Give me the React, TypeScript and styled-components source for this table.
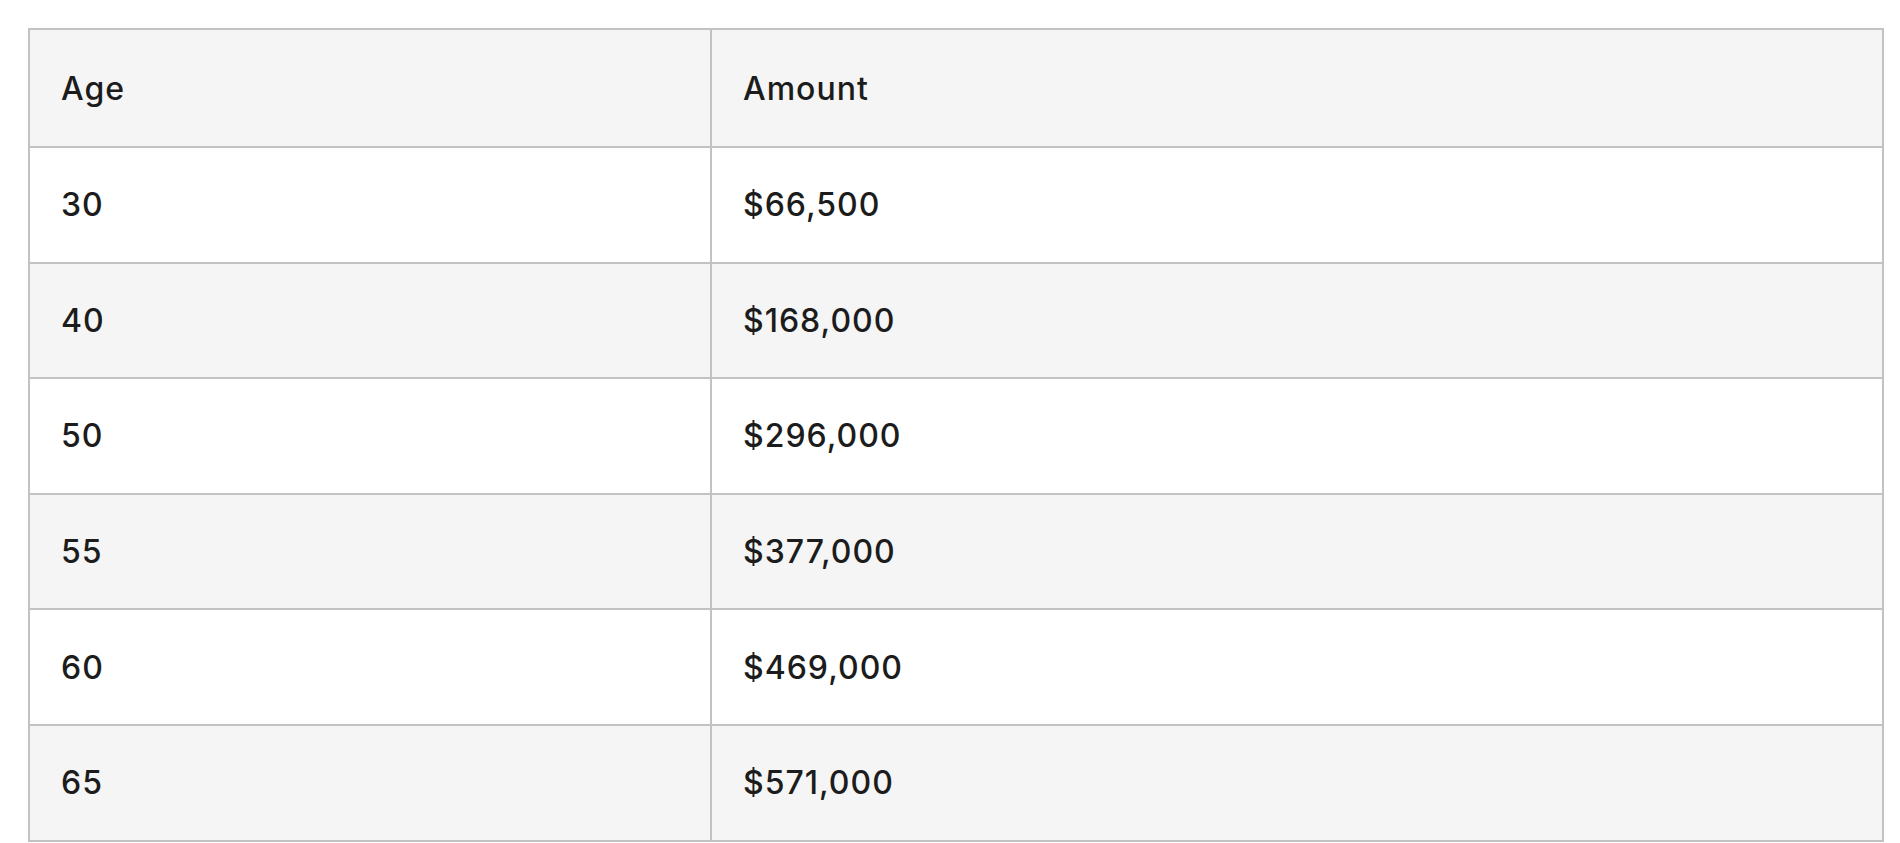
import React from "react";
import styled, { createGlobalStyle } from "styled-components";

const GlobalStyle = createGlobalStyle`
  html, body {
    margin: 0;
    padding: 0;
    background: #ffffff;
  }
  body {
    font-family: Inter, "Liberation Sans", sans-serif;
    color: #1c1c1c;
  }
`;

const Page = styled.div`
  padding: 28px 16px 0 28px;
`;

const Table = styled.table`
  width: 100%;
  border-collapse: collapse;
  table-layout: fixed;
  border: 2px solid #c2c2c2;
`;

const HeadCell = styled.th`
  height: 116px;
  padding: 0 31px;
  text-align: left;
  font-weight: 500;
  font-size: 32px;
  letter-spacing: 1px;
  background: #f5f5f5;
  border: 2px solid #c2c2c2;
`;

const Row = styled.tr<{ $striped: boolean }>`
  background: ${(p) => (p.$striped ? "#f5f5f5" : "#ffffff")};
`;

const Cell = styled.td`
  height: 113.6px;
  padding: 0 31px;
  font-size: 32px;
  font-weight: 500;
  letter-spacing: 1px;
  border: 2px solid #c2c2c2;
`;

const rows = [
  { age: "30", amount: "$66,500" },
  { age: "40", amount: "$168,000" },
  { age: "50", amount: "$296,000" },
  { age: "55", amount: "$377,000" },
  { age: "60", amount: "$469,000" },
  { age: "65", amount: "$571,000" },
];

export default function App() {
  return (
    <>
      <GlobalStyle />
      <Page>
        <Table>
          <colgroup>
            <col style={{ width: 682 }} />
            <col />
          </colgroup>
          <thead>
            <tr>
              <HeadCell>Age</HeadCell>
              <HeadCell>Amount</HeadCell>
            </tr>
          </thead>
          <tbody>
            {rows.map((row, i) => (
              <Row key={row.age} $striped={i % 2 === 1}>
                <Cell>{row.age}</Cell>
                <Cell>{row.amount}</Cell>
              </Row>
            ))}
          </tbody>
        </Table>
      </Page>
    </>
  );
}
